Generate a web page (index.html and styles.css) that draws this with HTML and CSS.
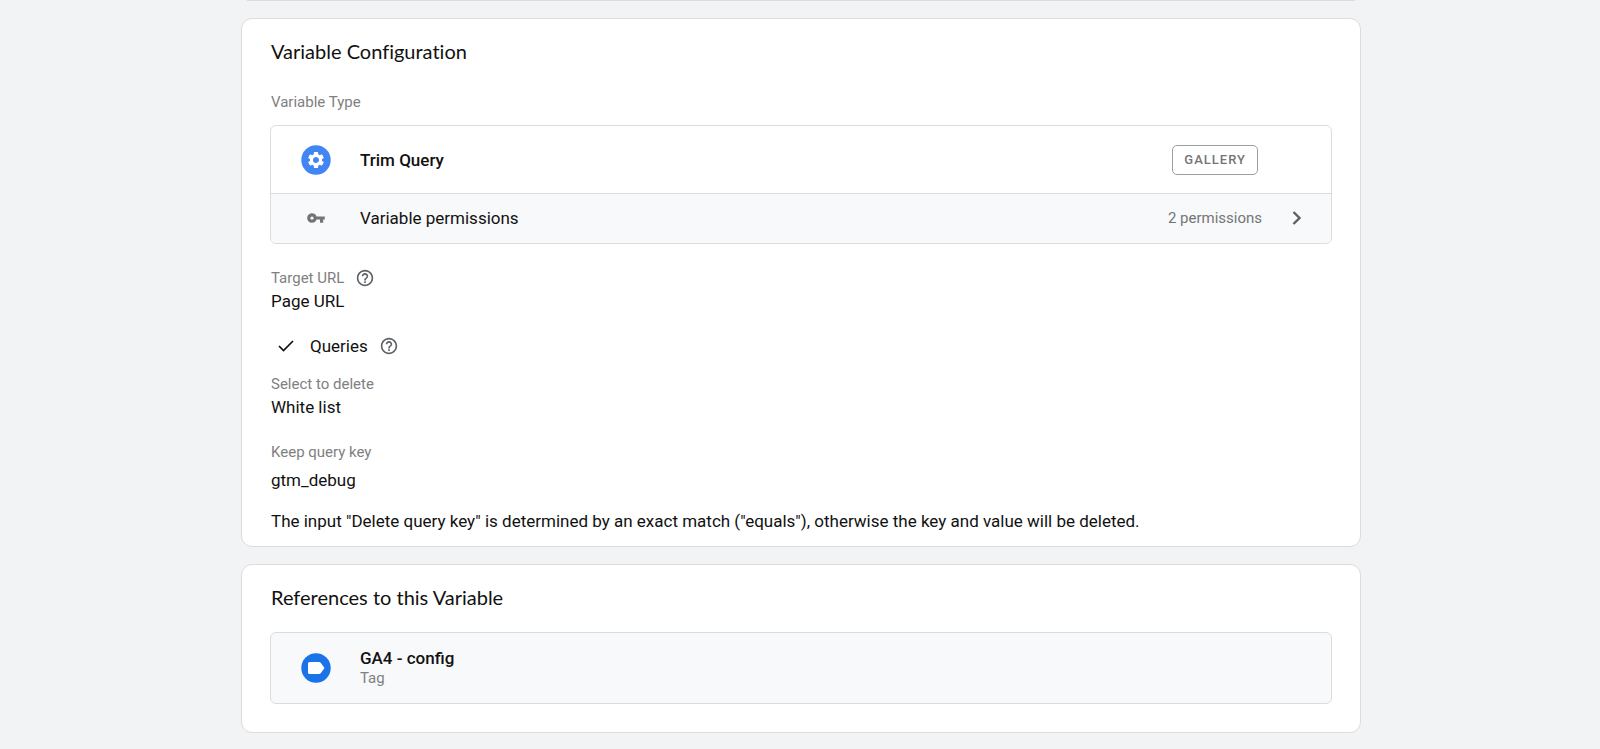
FILE: index.html
```
<!DOCTYPE html>
<html lang="en">
<head>
	<meta charset="utf-8">
	<title>Variable Configuration</title>
	<meta name="viewport" content="width=device-width, initial-scale=1">
	<link rel="stylesheet" href="styles.css">
</head>
<body>
	<main class="page">
		<div class="card-end"></div>

		<section class="card card-config">
			<h2 class="card-title">Variable Configuration</h2>
			<div class="label type-label">Variable Type</div>
			<div class="box">
				<div class="box-row type-row">
					<svg class="row-icon" width="30" height="30" viewBox="0 0 30 30">
						<circle cx="15" cy="15" r="14.700" fill="#4285f4"/>
						<path transform="translate(5 5) scale(.8333)" fill="#fff" d="M19.14 12.94c.04-.3.06-.61.06-.94 0-.32-.02-.64-.07-.94l2.03-1.58a.49.49 0 0 0 .12-.61l-1.92-3.32a.488.488 0 0 0-.59-.22l-2.39.96c-.5-.38-1.03-.7-1.62-.94l-.36-2.54a.484.484 0 0 0-.48-.41h-3.84c-.24 0-.43.17-.47.41l-.36 2.54c-.59.24-1.13.57-1.62.94l-2.39-.96c-.22-.08-.47 0-.59.22L2.74 8.87c-.12.21-.08.47.12.61l2.03 1.58c-.05.3-.09.63-.09.94s.02.64.07.94l-2.03 1.58a.49.49 0 0 0-.12.61l1.92 3.32c.12.22.37.29.59.22l2.39-.96c.5.38 1.03.7 1.62.94l.36 2.54c.05.24.24.41.48.41h3.84c.24 0 .44-.17.47-.41l.36-2.54c.59-.24 1.13-.56 1.62-.94l2.39.96c.22.08.47 0 .59-.22l1.92-3.32c.12-.22.07-.47-.12-.61l-2.01-1.58zM12 15.6A3.61 3.61 0 0 1 8.400 12c0-1.98 1.62-3.600 3.600-3.600s3.600 1.620 3.600 3.600-1.620 3.600-3.600 3.600z"/>
					</svg>
					<span class="row-name">Trim Query</span>
					<span class="chip">GALLERY</span>
				</div>
				<button type="button" class="box-row perm-row">
					<svg class="row-icon" width="30" height="20" viewBox="-3 2 30 20">
						<path transform="translate(2.400 2.400) scale(.8)" fill="#757575" d="M12.650 10A5.990 5.990 0 0 0 7 6c-3.310 0-6 2.690-6 6s2.690 6 6 6a5.990 5.990 0 0 0 5.650-4H17v4h4v-4h2v-4H12.650zM7 14c-1.100 0-2-.9-2-2s.9-2 2-2 2 .9 2 2-.9 2-2 2z"/>
					</svg>
					<span>Variable permissions</span>
					<span class="perm-count">2 permissions</span>
					<svg class="chevron" width="10" height="16" viewBox="0 0 10 16">
						<path d="M1.500 2l6 6-6 6" fill="none" stroke="#616161" stroke-width="2.400"/>
					</svg>
				</button>
			</div>

			<div class="field">
				<div class="label">Target URL
					<button type="button" class="help" aria-label="Help for Target URL">
						<svg width="18" height="18" viewBox="1 1 22 22"><path fill="#5f6368" d="M11 18h2v-2h-2v2zm1-16C6.480 2 2 6.480 2 12s4.480 10 10 10 10-4.480 10-10S17.520 2 12 2zm0 18c-4.410 0-8-3.590-8-8s3.590-8 8-8 8 3.590 8 8-3.590 8-8 8zm0-14c-2.210 0-4 1.790-4 4h2c0-1.100.9-2 2-2s2 .9 2 2c0 2-3 1.750-3 5h2c0-2.250 3-2.500 3-5 0-2.210-1.790-4-4-4z"/></svg>
					</button>
				</div>
				<div class="value">Page URL</div>
			</div>

			<div class="check-row">
				<svg class="check" width="16" height="14" viewBox="0 0 16 14">
					<path d="M1 7l4.500 4.500L15 2" fill="none" stroke="#111" stroke-width="1.700"/>
				</svg>
				<span>Queries</span>
				<button type="button" class="help" aria-label="Help for Queries">
					<svg width="18" height="18" viewBox="1 1 22 22"><path fill="#5f6368" d="M11 18h2v-2h-2v2zm1-16C6.480 2 2 6.480 2 12s4.480 10 10 10 10-4.480 10-10S17.520 2 12 2zm0 18c-4.410 0-8-3.590-8-8s3.590-8 8-8 8 3.590 8 8-3.590 8-8 8zm0-14c-2.210 0-4 1.790-4 4h2c0-1.100.9-2 2-2s2 .9 2 2c0 2-3 1.750-3 5h2c0-2.250 3-2.500 3-5 0-2.210-1.790-4-4-4z"/></svg>
				</button>
			</div>

			<div class="field field-select">
				<div class="label">Select to delete</div>
				<div class="value">White list</div>
			</div>
			<div class="field">
				<div class="label">Keep query key</div>
				<div class="value value-item">gtm_debug</div>
			</div>
			<p class="note">The input "Delete query key" is determined by an exact match ("equals"), otherwise the key and value will be deleted.</p>
		</section>

		<section class="card card-refs">
			<h2 class="card-title">References to this Variable</h2>
			<a class="box box-row ref-row" href="#">
				<svg class="row-icon" width="30" height="30" viewBox="0 0 30 30">
					<circle cx="15" cy="15" r="14.700" fill="#1a73e8"/>
					<path fill="#fff" d="M8.500 9h9.500q1.200 0 1.900 1l3.600 5-3.600 5q-.7 1-1.900 1H8.500q-1.500 0-1.500-1.500v-9Q7 9 8.500 9z"/>
				</svg>
				<span class="ref-text">
					<span class="row-name">GA4 - config</span>
					<span class="ref-type">Tag</span>
				</span>
			</a>
		</section>
	</main>
</body>
</html>
```
FILE: styles.css
```
* {
	box-sizing: border-box;
}
body {
	margin: 0;
	background-color: #f1f3f4;
	color: #111;
	font-family: Roboto, "Liberation Sans", sans-serif;
	font-size: 17px;
	line-height: 24px;
}
button {
	padding: 0;
	border: 0;
	background: none;
	color: inherit;
	font: inherit;
	text-align: left;
	cursor: pointer;
}
svg {
	display: block;
	flex: none;
}
.page {
	max-width: 1122px;
	margin: 0 auto;
	padding-left: 2px;
}
/* bottom edge of the card above */
.card-end {
	height: 1px;
	margin: 0 6px 17px;
	background-color: #dadce0;
}
.card {
	margin-bottom: 17px;
	padding: 18px 29px 0;
	border: 1px solid #dadce0;
	border-radius: 11px;
	background-color: #fff;
}
.card-config {
	padding-bottom: 13px;
}
.card-refs {
	padding-bottom: 28px;
}
.card-title {
	margin: 0 0 21px;
	font-family: Lato, Roboto, sans-serif;
	font-size: 20px;
	font-weight: 400;
	font-variant-ligatures: none;
	line-height: 28px;
}
.label {
	display: flex;
	align-items: center;
	gap: 12px;
	color: #808080;
	font-size: 15px;
	line-height: 24px;
}
.type-label {
	margin: 25px 0 11px;
}
.box {
	border: 1px solid #dadce0;
	border-radius: 6px;
	overflow: hidden;
	margin: 0 -1px;
}
.box-row {
	display: flex;
	align-items: center;
	padding-left: 30px;
}
.row-icon {
	margin-right: 29px;
}
.row-name {
	font-weight: 500;
}
.type-row {
	height: 67px;
	padding-top: 1px;
	padding-right: 73px;
}
.chip {
	margin-left: auto;
	padding: 0 11px;
	border: 1px solid #9e9e9e;
	border-radius: 5px;
	color: #757575;
	font-size: 13px;
	font-weight: 500;
	line-height: 28px;
	letter-spacing: 1px;
}
.perm-row {
	width: 100%;
	height: 50px;
	padding-right: 29px;
	padding-bottom: 2px;
	border-top: 1px solid #dadce0;
	background-color: #f8f9fb;
}
.perm-count {
	margin-left: auto;
	color: #757575;
	font-size: 15px;
}
.chevron {
	margin-left: 30px;
}
.field {
	margin-top: 22px;
}
.value {
	line-height: 22px;
}
.value-item {
	line-height: 32px;
}
.check-row {
	display: flex;
	align-items: center;
	margin-top: 22px;
	padding-left: 7px;
}
.check {
	margin-right: 16px;
}
.check-row .help {
	margin-left: 12px;
}
.field-select {
	margin-top: 14px;
}
.note {
	margin: 13px 0 0;
}
.ref-row {
	height: 72px;
	background-color: #f8f9fb;
	color: inherit;
	text-decoration: none;
}
.ref-text {
	display: flex;
	flex-direction: column;
	line-height: 20px;
}
.ref-type {
	color: #808080;
	font-size: 15px;
}
```
